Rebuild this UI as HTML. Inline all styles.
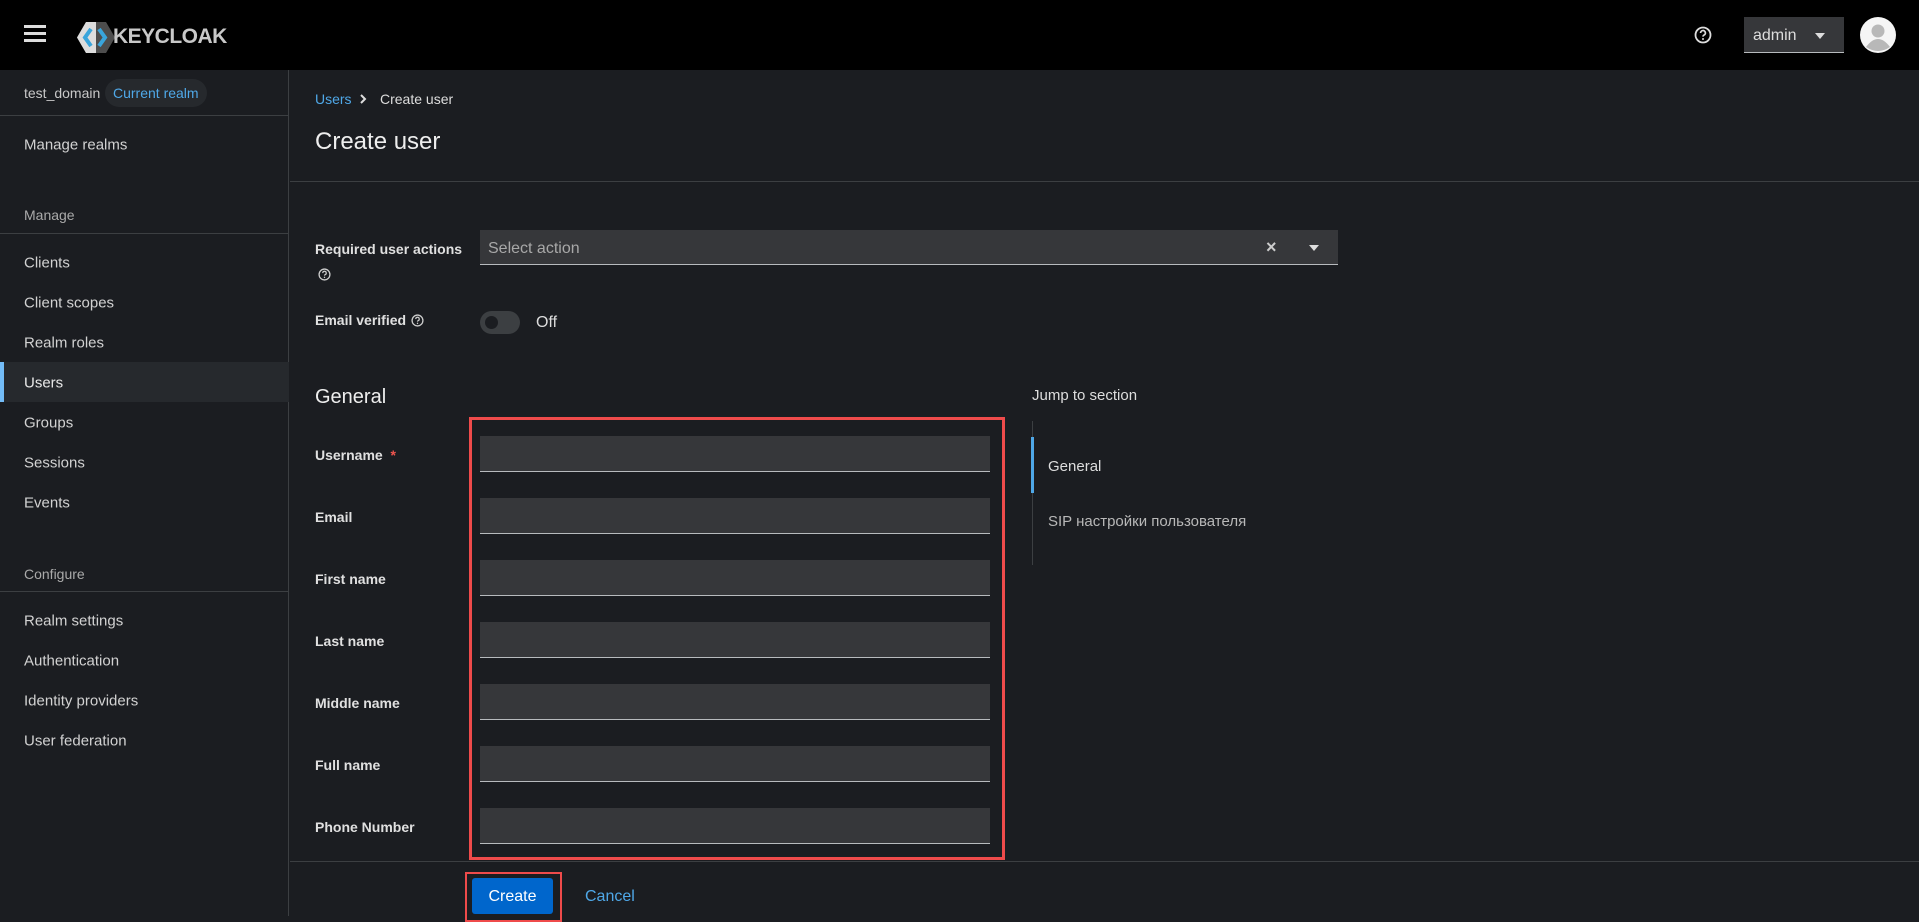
<!DOCTYPE html>
<html><head><meta charset="utf-8"><style>
*{box-sizing:border-box;margin:0;padding:0}
body{width:1919px;height:916px;overflow:hidden;background:#1b1d21;font-family:"Liberation Sans",sans-serif;color:#e0e0e0;position:relative}
.a{position:absolute;white-space:nowrap}
.hdr{left:0;top:0;width:1919px;height:70px;background:#000}
.side{left:0;top:70px;width:289px;height:846px;background:#1b1d21;border-right:1px solid #3c3f42}
.nav{left:24px;font-size:15px;color:#d2d2d2;transform:translateY(-50%)}
.lbl{left:315px;font-size:14px;font-weight:bold;color:#e0e0e0;transform:translateY(-50%)}
.inp{left:480px;width:510px;height:36px;background:#36373a;border-bottom:1px solid #b8bbbe}
.hr{height:1px;background:#3c3f42}
</style></head><body>
<div class="a hdr"></div>
<div class="a" style="left:24px;top:25px;width:22px;height:3px;background:#ddd;box-shadow:0 7px 0 #ddd,0 14px 0 #ddd"></div>
<svg class="a" style="left:76px;top:21px" width="40" height="33" viewBox="0 0 40 33"><polygon points="10,1 30,1 39,16.5 30,32 10,32 1,16.5" fill="#4d4d4d"/><polygon points="1,16.5 10,1 20,1 20,32 10,32" fill="#ddd"/><path d="M15 8 L9 16.5 L15 25 M23 8 L29 16.5 L23 25" stroke="#39a5dc" stroke-width="4" fill="none"/></svg>
<div class="a" style="left:113px;top:25px;font-size:21px;font-weight:bold;color:#c8c8c8;letter-spacing:-0.5px">KEYCLOAK</div>
<svg class="a" style="left:1694px;top:26px" width="18" height="18" viewBox="0 0 18 18"><circle cx="9" cy="9" r="7.5" stroke="#ddd" stroke-width="1.8" fill="none"/><path d="M6.6 7a2.4 2.4 0 1 1 3.2 2.2c-.6.3-.8.7-.8 1.4" stroke="#ddd" stroke-width="1.7" fill="none"/><circle cx="9" cy="13" r="1" fill="#ddd"/></svg>
<div class="a" style="left:1744px;top:17px;width:100px;height:36px;background:#36373a;border-bottom:1px solid #b8bbbe"></div>
<div class="a" style="left:1753px;top:27px;font-size:16px;color:#ddd">admin</div>
<div class="a" style="left:1815px;top:33px;border:5px solid transparent;border-top:6px solid #ddd;border-bottom:0"></div>
<svg class="a" style="left:1860px;top:17px" width="36" height="36" viewBox="0 0 36 36"><circle cx="18" cy="18" r="18" fill="#f5f5f5"/><circle cx="18" cy="14" r="6.5" fill="#b8b8b8"/><path d="M6 30 Q18 14 30 30 Q18 38 6 30Z" fill="#b8b8b8"/></svg>
<div class="a side"></div>
<div class="a" style="left:24px;top:85px;font-size:14px;color:#c8c8c8">test_domain</div>
<div class="a" style="left:105px;top:79px;height:28px;padding:0 8px;line-height:29px;border-radius:14px;background:#26292d;font-size:14px;color:#4fa8e8">Current realm</div>
<div class="a hr" style="left:0;top:115px;width:289px"></div>
<div class="a nav" style="top:145px">Manage realms</div>
<div class="a nav" style="top:215px;font-size:14px;color:#aaa">Manage</div>
<div class="a hr" style="left:0;top:233px;width:289px"></div>
<div class="a nav" style="top:263px">Clients</div>
<div class="a nav" style="top:303px">Client scopes</div>
<div class="a nav" style="top:343px">Realm roles</div>
<div class="a" style="left:0;top:362px;width:289px;height:40px;background:#26292d;border-left:4px solid #73bcf7"></div>
<div class="a nav" style="top:383px;color:#e8e8e8">Users</div>
<div class="a nav" style="top:423px">Groups</div>
<div class="a nav" style="top:463px">Sessions</div>
<div class="a nav" style="top:503px">Events</div>
<div class="a nav" style="top:574px;font-size:14px;color:#aaa">Configure</div>
<div class="a hr" style="left:0;top:591px;width:289px"></div>
<div class="a nav" style="top:621px">Realm settings</div>
<div class="a nav" style="top:661px">Authentication</div>
<div class="a nav" style="top:701px">Identity providers</div>
<div class="a nav" style="top:741px">User federation</div>

<div class="a" style="left:315px;top:91px;font-size:14px;color:#4fa8e8">Users</div>
<svg class="a" style="left:359px;top:94px" width="8" height="10" viewBox="0 0 8 10"><path d="M2 1 L6 5 L2 9" stroke="#ddd" stroke-width="2" fill="none"/></svg>
<div class="a" style="left:380px;top:91px;font-size:14px;color:#ddd">Create user</div>
<div class="a" style="left:315px;top:128px;font-size:24px;color:#eee">Create user</div>
<div class="a hr" style="left:290px;top:181px;width:1629px"></div>

<div class="a lbl" style="top:249px">Required user actions</div>
<svg class="a" style="left:318px;top:268px" width="13" height="13" viewBox="0 0 18 18"><circle cx="9" cy="9" r="7.5" stroke="#ccc" stroke-width="1.8" fill="none"/><path d="M6.6 7a2.4 2.4 0 1 1 3.2 2.2c-.6.3-.8.7-.8 1.4" stroke="#ccc" stroke-width="1.7" fill="none"/><circle cx="9" cy="13" r="1" fill="#ccc"/></svg>
<div class="a" style="left:480px;top:230px;width:858px;height:35px;background:#36373a;border-bottom:1px solid #b8bbbe"></div>
<div class="a" style="left:488px;top:240px;font-size:16px;color:#a8a8a8">Select action</div>
<div class="a" style="left:1266px;top:237px;font-size:18px;color:#ccc;font-weight:bold">×</div>
<div class="a" style="left:1309px;top:245px;border:5px solid transparent;border-top:6px solid #ddd;border-bottom:0"></div>
<div class="a lbl" style="top:320px">Email verified</div>
<svg class="a" style="left:411px;top:314px" width="13" height="13" viewBox="0 0 18 18"><circle cx="9" cy="9" r="7.5" stroke="#ccc" stroke-width="1.8" fill="none"/><path d="M6.6 7a2.4 2.4 0 1 1 3.2 2.2c-.6.3-.8.7-.8 1.4" stroke="#ccc" stroke-width="1.7" fill="none"/><circle cx="9" cy="13" r="1" fill="#ccc"/></svg>
<div class="a" style="left:480px;top:311px;width:40px;height:23px;border-radius:12px;background:#3c3f42"></div>
<div class="a" style="left:485px;top:316px;width:13px;height:13px;border-radius:50%;background:#1b1d21"></div>
<div class="a" style="left:536px;top:314px;font-size:16px;color:#ddd">Off</div>

<div class="a" style="left:315px;top:386px;font-size:20px;color:#eee">General</div>
<div class="a" style="left:1032px;top:387px;font-size:15px;color:#ddd">Jump to section</div>
<div class="a" style="left:1032px;top:421px;width:1px;height:144px;background:#3c3f42"></div>
<div class="a" style="left:1031px;top:437px;width:3px;height:56px;background:#4fa8e8"></div>
<div class="a" style="left:1048px;top:458px;font-size:15px;color:#ddd">General</div>
<div class="a" style="left:1048px;top:513px;font-size:15px;color:#b8b8b8">SIP настройки пользователя</div>

<div class="a" style="left:469px;top:417px;width:536px;height:443px;border:3px solid #ef4b4b"></div>
<div class="a inp" style="top:436px"></div>
<div class="a inp" style="top:498px"></div>
<div class="a inp" style="top:560px"></div>
<div class="a inp" style="top:622px"></div>
<div class="a inp" style="top:684px"></div>
<div class="a inp" style="top:746px"></div>
<div class="a inp" style="top:808px"></div>
<div class="a lbl" style="top:455px">Username <span style="color:#f0554e">&nbsp;*</span></div>
<div class="a lbl" style="top:517px">Email</div>
<div class="a lbl" style="top:579px">First name</div>
<div class="a lbl" style="top:641px">Last name</div>
<div class="a lbl" style="top:703px">Middle name</div>
<div class="a lbl" style="top:765px">Full name</div>
<div class="a lbl" style="top:827px">Phone Number</div>

<div class="a hr" style="left:290px;top:861px;width:1629px"></div>
<div class="a" style="left:465px;top:872px;width:97px;height:50px;border:2px solid #ef4b4b"></div>
<div class="a" style="left:472px;top:878px;width:81px;height:36px;background:#0066cc;border-radius:3px;color:#fff;font-size:16px;text-align:center;line-height:38px">Create</div>
<div class="a" style="left:585px;top:888px;font-size:16px;color:#4fa8e8">Cancel</div>
</body></html>
